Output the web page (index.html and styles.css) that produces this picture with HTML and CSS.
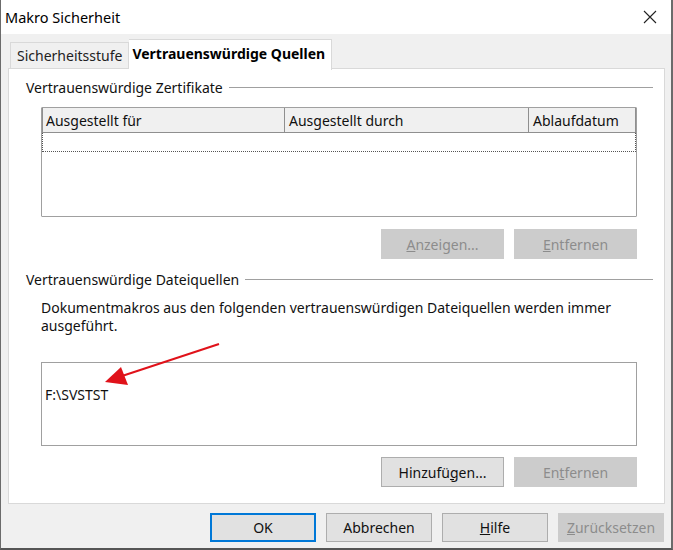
FILE: index.html
```html
<!DOCTYPE html>
<html lang="de">
<head>
<meta charset="utf-8">
<title>Makro Sicherheit</title>
<link rel="stylesheet" href="styles.css">
</head>
<body>
<div class="window">
  <div class="titlebar">
    <span class="title">Makro Sicherheit</span>
    <svg class="close" width="14" height="14" viewBox="0 0 14 14"><path d="M1 1 L13 13 M13 1 L1 13" stroke="#222" stroke-width="1.1" fill="none"/></svg>
  </div>
  <div class="body">
    <div class="tabs">
      <div class="tab">Sicherheitsstufe</div>
      <div class="tab active">Vertrauenswürdige Quellen</div>
    </div>
    <div class="panel">
      <div class="group-head"><span>Vertrauenswürdige Zertifikate</span><span class="rule"></span></div>
      <div class="table">
        <div class="thead">
          <div class="th c1">Ausgestellt für</div>
          <div class="th c2">Ausgestellt durch</div>
          <div class="th c3">Ablaufdatum</div>
        </div>
        <div class="row-focus"></div>
      </div>
      <div class="btnrow">
        <button class="btn disabled"><u>A</u>nzeigen...</button>
        <button class="btn disabled"><u>E</u>ntfernen</button>
      </div>
      <div class="group-head second"><span>Vertrauenswürdige Dateiquellen</span><span class="rule"></span></div>
      <p class="desc">Dokumentmakros aus den folgenden vertrauenswürdigen Dateiquellen werden immer ausgeführt.</p>
      <div class="list">
        <div class="item">F:\SVSTST</div>
      </div>
      <div class="btnrow second">
        <button class="btn">Hinzufü<u>g</u>en...</button>
        <button class="btn disabled">En<u>t</u>fernen</button>
      </div>
    </div>
    <div class="footer">
      <button class="btn fb default">OK</button>
      <button class="btn fb">Abbrechen</button>
      <button class="btn fb"><u>H</u>ilfe</button>
      <button class="btn fb disabled"><u>Z</u>urücksetzen</button>
    </div>
  </div>
  <svg class="arrow" width="130" height="50" viewBox="0 0 130 50">
    <line x1="122" y1="2" x2="22" y2="35" stroke="#e0121a" stroke-width="2"/>
    <polygon points="8,40 24,25 31,43" fill="#e0121a"/>
  </svg>
</div>
</body>
</html>
```

FILE: styles.css
```css
* { box-sizing: border-box; }
html, body { margin: 0; padding: 0; background: #fff; }
body {
  font-family: "Noto Sans", "Open Sans", "Liberation Sans", sans-serif;
  font-size: 14px;
  color: #111;
}
.window {
  position: relative;
  width: 673px;
  height: 550px;
  border-left: 1px solid #6b6b6b;
  border-right: 2px solid #6b6b6b;
  border-bottom: 2px solid #555;
  display: flex;
  flex-direction: column;
  overflow: hidden;
}
.titlebar {
  height: 34px;
  background: #fff;
  display: flex;
  align-items: center;
  justify-content: space-between;
  padding: 0 14px 0 4px;
  flex: none;
}
.title { font-size: 14.5px; color: #000; }
.body {
  flex: 1;
  background: #f0f0f0;
  padding: 5px 6px 0 7px;
  display: flex;
  flex-direction: column;
}
.tabs {
  display: flex;
  align-items: flex-end;
  height: 29px;
  flex: none;
  margin-left: 2px;
}
.tab {
  height: 26px;
  padding: 0 6px 0 6px;
  line-height: 25px;
  border: 1px solid #d9d9d9;
  border-bottom: none;
  background: #f0f0f0;
  color: #222;
}
.tab.active {
  height: 31px;
  margin-bottom: -2px;
  background: #fff;
  font-weight: bold;
  border-color: #d9d9d9;
  line-height: 28px;
  position: relative;
  z-index: 1;
  padding: 0 6px 0 3px;
  border-left: none;
  color: #000;
}
.panel {
  background: #fff;
  border: 1px solid #d9d9d9;
  height: 436px;
  padding: 8px 11px 0 32px;
  flex: none;
}
.group-head {
  display: flex;
  align-items: center;
  margin-left: -15px;
  height: 20px;
}
.group-head .rule {
  flex: 1;
  height: 1px;
  background: #a0a0a0;
  margin-left: 6px;
}
.group-head.second { margin-top: 10px; }
.table {
  margin-top: 10px;
  width: 596px;
  height: 110px;
  border: 1px solid #a0a0a0;
  border-radius: 1px;
  background: #fff;
}
.thead {
  display: flex;
  height: 25px;
  background: #f0f0f0;
  border: 1px solid #8f8f8f;
  border-top: none;
  border-left: none;
}
.th {
  padding-left: 4px;
  line-height: 25px;
  border-right: 1px solid #8f8f8f;
  color: #111;
}
.th.c1 { width: 243px; padding-left: 3px; border-left: 1px solid #8f8f8f; }
.th.c2 { width: 244px; }
.th.c3 { flex: 1; border-right: none; }
.row-focus {
  height: 19px;
  border: 1px dotted #555;
  border-top: none;
}
.btnrow {
  display: flex;
  justify-content: flex-end;
  gap: 10px;
  width: 596px;
  margin-top: 12px;
}
.btnrow.second { margin-top: 11px; }
.btn {
  font: inherit;
  width: 123px;
  height: 30px;
  background: #e1e1e1;
  border: 1px solid #adadad;
  color: #111;
  padding: 0;
}
.btn.disabled {
  background: #cccccc;
  border-color: #cccccc;
  color: #8c8c8c;
}
.desc {
  margin: 10px 0 0;
  width: 600px;
  line-height: 18px;
}
.list {
  margin-top: 27px;
  width: 596px;
  height: 84px;
  border: 1px solid #a0a0a0;
  padding: 22px 0 0 3px;
}
.footer {
  display: flex;
  justify-content: flex-end;
  gap: 10px;
  padding-top: 9px;
  padding-right: 1px;
}
.btn.fb { width: 106px; height: 29px; }
.btn.default { border: 2px solid #0078d7; }
.arrow {
  position: absolute;
  left: 96px;
  top: 342px;
}
```
